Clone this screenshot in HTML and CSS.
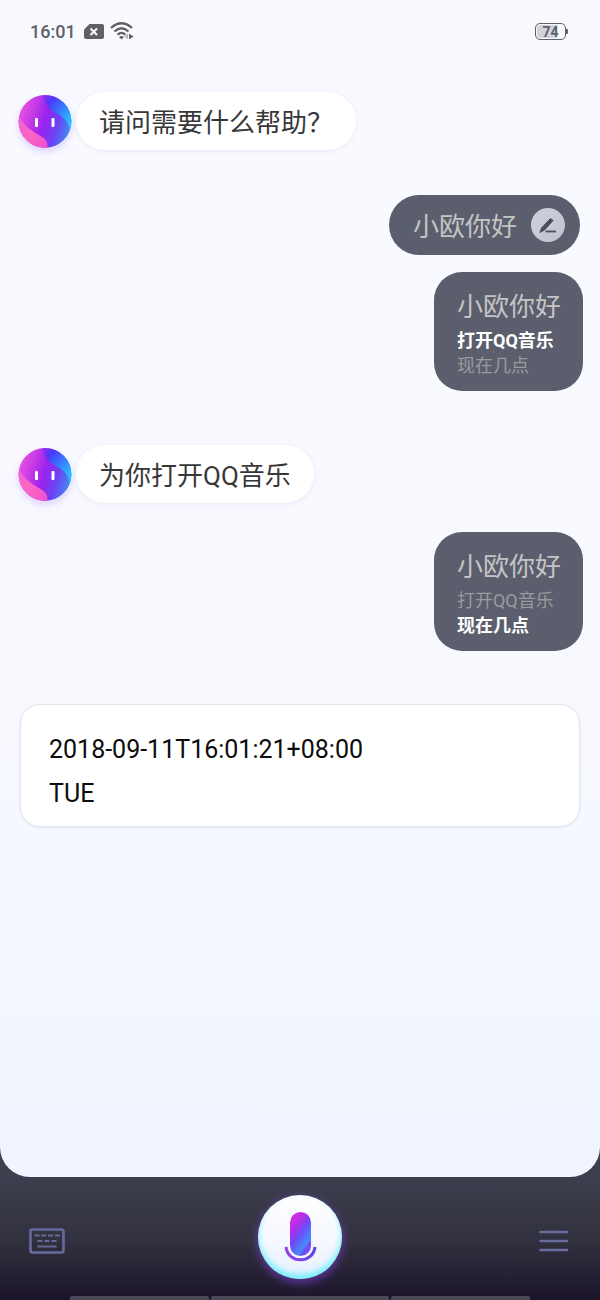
FILE: index.html
```html
<!DOCTYPE html>
<html lang="zh-CN">
<head>
<meta charset="utf-8">
<meta name="viewport" content="width=device-width, initial-scale=1">
<title>语音助手</title>
<link rel="stylesheet" href="styles.css">
</head>
<body>
<svg class="defs" width="0" height="0" aria-hidden="true">
  <defs>
    <linearGradient id="face-base" x1="0" y1="0.3" x2="1" y2="0.6">
      <stop offset="0" stop-color="#ea55e0"/>
      <stop offset="0.25" stop-color="#c93ce6"/>
      <stop offset="0.5" stop-color="#9a22ee"/>
      <stop offset="0.75" stop-color="#6a44f4"/>
      <stop offset="1" stop-color="#4390f0"/>
    </linearGradient>
    <linearGradient id="face-blue" x1="0" y1="0" x2="0.9" y2="1">
      <stop offset="0" stop-color="#5a30f2" stop-opacity="0.2"/>
      <stop offset="0.25" stop-color="#4a3cf8"/>
      <stop offset="0.5" stop-color="#3a70fb"/>
      <stop offset="0.8" stop-color="#2bb4fb"/>
      <stop offset="1" stop-color="#2cc4f8"/>
    </linearGradient>
    <linearGradient id="face-pink" x1="0" y1="0" x2="1" y2="1">
      <stop offset="0" stop-color="#f05fdd"/>
      <stop offset="0.5" stop-color="#fd66c3"/>
      <stop offset="1" stop-color="#ee50cf"/>
    </linearGradient>
    <clipPath id="face-clip"><circle cx="27" cy="27.5" r="26.5"/></clipPath>
    <symbol id="face" viewBox="0 0 54 54">
      <g clip-path="url(#face-clip)">
        <rect width="54" height="54" fill="url(#face-base)"/>
        <path d="M24 0C26 9 31 15 38 19C46 23 51 28 52 38L54 38V0Z" fill="url(#face-blue)"/>
        <path d="M0 18C3 29 11 35 19 40C27 44 31 48 29 54H0Z" fill="url(#face-pink)"/>
      </g>
      <rect x="17" y="24" width="3" height="9" rx="1" fill="#fff"/>
      <rect x="33.500" y="24" width="3" height="9" rx="1" fill="#fff"/>
    </symbol>
  </defs>
</svg>

<div class="app">
  <main class="screen">
    <header class="status">
      <div class="status-left">
        <time class="clock">16:01</time>
        <svg class="sim" viewBox="0 0 20 15" aria-label="无 SIM 卡">
          <path d="M5.500 0H18Q20 0 20 2V13Q20 15 18 15H2Q0 15 0 13V5.500Z" fill="#606167"/>
          <path d="M6.500 4.500L13 11M13 4.500L6.500 11" stroke="#f8f9ff" stroke-width="2" fill="none"/>
        </svg>
        <svg class="wifi" viewBox="0 0 25 19" aria-label="Wi-Fi">
          <g fill="none" stroke="#606167" stroke-width="2.200">
            <path d="M1 6Q11.500 -3.500 22 6"/>
            <path d="M4.500 9.500Q11.500 3 18.500 9.500"/>
            <path d="M7.500 12.800Q11.500 9 15.500 12.800"/>
          </g>
          <path d="M9 15Q11.500 12.800 14 15L11.500 17.500Z" fill="#606167"/>
          <path d="M18 11.500V17.500L14.500 14.500Z" fill="#b5b6bd"/>
          <path d="M19 11.500V17.500L23.500 14.500Z" fill="#606167"/>
        </svg>
      </div>
      <div class="battery">
        <span class="battery-case">74</span><span class="battery-tip"></span>
      </div>
    </header>

    <section class="chat">
      <div class="bot-row">
        <svg class="avatar" role="img" aria-label="小欧"><use href="#face"/></svg>
        <p class="bot-bubble">请问需要什么帮助？</p>
      </div>

      <div class="user-bubble">
        <span class="user-text">小欧你好</span>
        <button class="edit" type="button" aria-label="编辑">
          <svg viewBox="0 0 34 34" aria-hidden="true">
            <path d="M19.500 10.500L22 12.500L13.500 22L9 24.500L10.500 20Z" fill="#4b4d5c" stroke="#4b4d5c" stroke-width="1" stroke-linejoin="round"/>
            <path d="M14.500 23.500H25" stroke="#4b4d5c" stroke-width="1.800"/>
          </svg>
        </button>
      </div>

      <div class="user-card">
        <p class="card-title">小欧你好</p>
        <p class="option option-on">打开QQ音乐</p>
        <p class="option">现在几点</p>
      </div>

      <div class="bot-row bot-row-next">
        <svg class="avatar" role="img" aria-label="小欧"><use href="#face"/></svg>
        <p class="bot-bubble">为你打开QQ音乐</p>
      </div>

      <div class="user-card user-card-next">
        <p class="card-title">小欧你好</p>
        <p class="option">打开QQ音乐</p>
        <p class="option option-on">现在几点</p>
      </div>

      <article class="result">
        <p>2018-09-11T16:01:21+08:00</p>
        <p>TUE</p>
      </article>
    </section>
  </main>

  <footer class="dock">
    <div class="controls">
      <button class="tool" type="button" aria-label="键盘">
        <svg class="keyboard" viewBox="0 0 36 26" aria-hidden="true">
          <rect x="1.500" y="1.500" width="33" height="23" rx="2" fill="none" stroke="#666b9b" stroke-width="2.600"/>
          <g stroke="#666b9b" stroke-width="2" fill="none">
            <path d="M5.500 7.500H31" stroke-dasharray="5 1.800"/>
            <path d="M8.500 13H27.500" stroke-dasharray="5 2"/>
            <path d="M8.500 18.500H27.500"/>
          </g>
        </svg>
      </button>
      <button class="mic" type="button" aria-label="说话">
        <svg viewBox="0 0 84 84" aria-hidden="true">
          <defs>
            <linearGradient id="mic-body" gradientUnits="userSpaceOnUse" x1="28" y1="26" x2="58" y2="48">
              <stop offset="0" stop-color="#e22be0"/>
              <stop offset="0.300" stop-color="#b32ee8"/>
              <stop offset="0.500" stop-color="#6f4af6"/>
              <stop offset="0.800" stop-color="#448cfb"/>
              <stop offset="0.860" stop-color="#6f50f2"/>
              <stop offset="1" stop-color="#7448f0"/>
            </linearGradient>
            <linearGradient id="mic-arc" x1="0" y1="0" x2="1" y2="0">
              <stop offset="0" stop-color="#9a3fe4"/>
              <stop offset="1" stop-color="#5a45e6"/>
            </linearGradient>
          </defs>
          <rect x="32" y="17" width="21" height="44" rx="10.500" fill="url(#mic-body)"/>
          <path d="M28 52C30 69 55 69 57 52" fill="none" stroke="#eef4ff" stroke-width="6"/>
          <path d="M28 52C30 69 55 69 57 52" fill="none" stroke="url(#mic-arc)" stroke-width="3"/>
        </svg>
      </button>
      <button class="tool tool-end" type="button" aria-label="菜单">
        <svg class="menu" viewBox="0 0 32 22" aria-hidden="true">
          <path d="M1.500 2H28M1.500 11H28M1.500 20H28" stroke="#6a6d9e" stroke-width="2.600" stroke-linecap="round"/>
        </svg>
      </button>
    </div>
    <div class="handles"><span></span><span class="handle-mid"></span><span></span></div>
  </footer>
</div>
</body>
</html>
```
FILE: styles.css
```css
* {
  box-sizing: border-box;
}

body,
p {
  margin: 0;
}

body {
  font-family: Roboto, "Noto Sans CJK SC", sans-serif;
  background: #3d3f4e;
}

button {
  padding: 0;
  border: 0;
  background: none;
  cursor: pointer;
}

svg {
  display: block;
}

.defs {
  position: absolute;
}

.app {
  display: flex;
  flex-direction: column;
  min-height: 100vh;
}

.screen {
  flex: 1;
  padding-bottom: 32px;
  border-radius: 0 0 30px 30px;
  background: linear-gradient(#f9faff 0%, #f8f9ff 60%, #f2f6ff 85%, #f0f5ff 100%);
}

.status {
  display: flex;
  justify-content: space-between;
  align-items: center;
  height: 62px;
  padding: 0 32px 0 30px;
  color: #606167;
}

.status-left {
  display: flex;
  align-items: center;
}

.clock {
  padding-top: 2px;
  font-size: 18px;
  font-weight: 500;
  line-height: 24px;
}

.sim {
  width: 20px;
  height: 15px;
  margin-left: 8px;
}

.wifi {
  width: 25px;
  height: 19px;
  margin-left: 6px;
}

.battery {
  display: flex;
  align-items: center;
}

.battery-case {
  width: 31px;
  height: 17px;
  border: 1px solid #606167;
  border-radius: 5px;
  background: linear-gradient(90deg, #d2d3da 74%, #f8f9ff 74%);
  box-shadow: inset 0 0 0 1px #f8f9ff;
  font-size: 14px;
  font-weight: 700;
  line-height: 16px;
  text-align: center;
}

.battery-tip {
  width: 2px;
  height: 5px;
  border-radius: 0 1px 1px 0;
  background: #606167;
}

.chat {
  display: flex;
  flex-direction: column;
  padding: 30px 20px 0;
}

.bot-row {
  display: flex;
  align-items: center;
  gap: 4px;
  margin-left: -2px;
}

.bot-row-next {
  margin-top: 54px;
}

.avatar {
  flex: none;
  width: 54px;
  height: 54px;
  border-radius: 50%;
  box-shadow: 0 4px 7px rgba(120, 70, 240, 0.2);
}

.bot-bubble {
  padding: 12px 23px 8px;
  border-radius: 29px;
  background: #fff;
  box-shadow: 0 1px 5px rgba(80, 90, 160, 0.1);
  color: #373737;
  font-size: 26px;
  line-height: 38px;
}

.user-bubble {
  display: flex;
  align-items: center;
  align-self: flex-end;
  gap: 14px;
  margin-top: 45px;
  padding: 9px 15px 9px 24px;
  border-radius: 30px;
  background: #5b5e6d;
  color: #c5c4c4;
  font-size: 26px;
  line-height: 38px;
}

.user-text {
  padding-top: 4px;
}

.edit {
  width: 34px;
  height: 34px;
  border-radius: 50%;
  background: linear-gradient(135deg, #d0d1db, #bfc1cf);
}

.user-card {
  align-self: flex-end;
  margin: 17px -3px 0 0;
  padding: 16px 22px 13px 23px;
  border-radius: 28px;
  background: #5b5e6d;
}

.user-card-next {
  margin-top: 29px;
}

.card-title {
  margin-bottom: 2px;
  color: #c5c4c4;
  font-size: 26px;
  line-height: 38px;
}

.option {
  color: #9b9a9d;
  font-size: 18px;
  line-height: 25px;
}

.option-on {
  color: #fff;
  font-weight: 700;
}

.result {
  margin-top: 53px;
  padding: 23px 28px 10px;
  border: 1px solid #e2e4ee;
  border-radius: 20px;
  background: #fff;
  box-shadow: 0 1px 3px rgba(80, 90, 160, 0.08);
  color: #0c0c0c;
  font-size: 25px;
  line-height: 44px;
}

.dock {
  background: linear-gradient(#3d3f4e, #32313f 50%, #1c152b);
}

.controls {
  display: grid;
  grid-template-columns: 1fr auto 1fr;
  align-items: center;
  padding: 18px 29px 17px;
}

.tool {
  justify-self: start;
  margin-top: 8px;
}

.tool-end {
  justify-self: end;
}

.keyboard {
  width: 36px;
  height: 26px;
}

.menu {
  width: 32px;
  height: 22px;
}

.mic {
  width: 84px;
  height: 84px;
  border-radius: 50%;
  background: linear-gradient(#fff, #f4f7ff 60%, #e4f0ff);
  box-shadow: inset 0 -4px 6px 0 #6cf0f8, 0 3px 10px 1px rgba(134, 68, 230, 0.6);
}

.mic svg {
  width: 84px;
  height: 84px;
}

.handles {
  display: flex;
  gap: 2px;
  height: 4px;
  margin: 0 70px;
}

.handles span {
  flex: 140;
  border-radius: 2px 2px 0 0;
  background: #4b4857;
}

.handles .handle-mid {
  flex: 178;
}
```
